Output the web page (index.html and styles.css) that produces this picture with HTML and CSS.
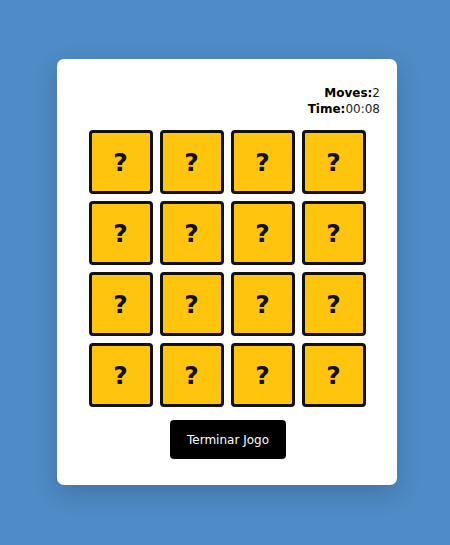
FILE: index.html
```html
<!DOCTYPE html>
<html lang="pt">
<head>
<meta charset="utf-8">
<title>Memory Game</title>
<link rel="stylesheet" href="styles.css">
</head>
<body>
<div class="card">
  <div class="stats">
    <div class="stat"><span class="label">Moves:</span>2</div>
    <div class="stat"><span class="label">Time:</span>00:08</div>
  </div>
  <div class="grid">
    <div class="tile">?</div><div class="tile">?</div><div class="tile">?</div><div class="tile">?</div>
    <div class="tile">?</div><div class="tile">?</div><div class="tile">?</div><div class="tile">?</div>
    <div class="tile">?</div><div class="tile">?</div><div class="tile">?</div><div class="tile">?</div>
    <div class="tile">?</div><div class="tile">?</div><div class="tile">?</div><div class="tile">?</div>
  </div>
  <div class="actions">
    <button class="btn">Terminar Jogo</button>
  </div>
</div>
</body>
</html>
```
FILE: styles.css
```css
html, body {
  margin: 0;
  padding: 0;
}
body {
  background: #4f8bc7;
  height: 545px;
  font-family: "DejaVu Sans", sans-serif;
  overflow: hidden;
}
.card {
  box-sizing: border-box;
  width: 340px;
  height: 426px;
  margin: 59px 0 0 57px;
  background: #ffffff;
  border-radius: 7px;
  box-shadow: 0 8px 24px rgba(0, 0, 0, 0.18);
  padding: 26px 17px 0 17px;
}
.stats {
  text-align: right;
  font-size: 12px;
  line-height: 16px;
  color: #222;
}
.label {
  font-weight: bold;
  color: #000;
}
.grid {
  margin: 13px auto 0;
  width: 277px;
  display: grid;
  grid-template-columns: repeat(4, 64px);
  grid-auto-rows: 64px;
  gap: 7px;
}
.tile {
  box-sizing: border-box;
  background: #ffc40d;
  border: 3px solid #111;
  border-radius: 4px;
  display: flex;
  align-items: center;
  justify-content: center;
  font-size: 25px;
  font-weight: bold;
  color: #111;
}
.actions {
  display: flex;
  justify-content: center;
  margin-top: 13px;
}
.btn {
  width: 116px;
  height: 39px;
  background: #000;
  color: #fff;
  border: none;
  border-radius: 4px;
  font-family: "DejaVu Sans", sans-serif;
  font-size: 12px;
  padding: 0;
  margin-left: 2px;
}
```
